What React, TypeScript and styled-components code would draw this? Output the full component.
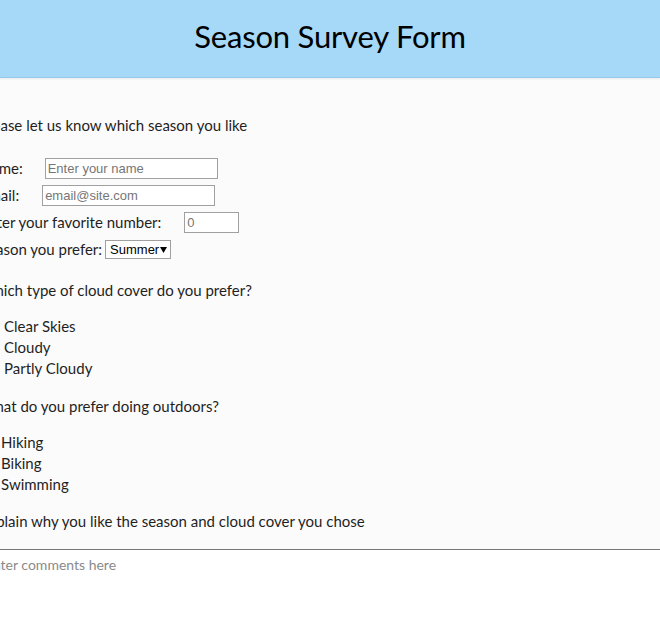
import styled, { createGlobalStyle } from 'styled-components'

const GlobalStyle = createGlobalStyle`
  html, body {
    margin: 0;
    padding: 0;
    background-color: #fbfbfb;
    overflow: hidden;
  }
  body {
    font-family: Lato, 'Noto Sans', sans-serif;
    color: #1f1f1f;
  }
`

const Header = styled.header`
  box-sizing: border-box;
  height: 78px;
  padding-bottom: 5px;
  background-color: #a6d8f7;
  border-bottom: 1px solid #96c9ea;
  box-shadow: 0 1px 2px rgba(0, 0, 0, 0.08);
  display: flex;
  align-items: center;
  justify-content: center;
`

const Title = styled.h1`
  margin: 0;
  font-size: 31px;
  font-weight: 400;
  letter-spacing: -0.2px;
  color: #000;
`

const Form = styled.form`
  margin-left: -20px;
  width: calc(100% + 20px);
  font-size: 15px;
  line-height: 21px;
`

const Intro = styled.p`
  margin: 37px 0 22px;
`

const Field = styled.div`
  display: flex;
  align-items: center;
  height: 21px;
  margin-bottom: 6px;
`

const Label = styled.label<{ $gap?: number }>`
  margin-right: ${(p) => p.$gap ?? 23}px;
`

const TextInput = styled.input<{ $width: number }>`
  box-sizing: border-box;
  width: ${(p) => p.$width}px;
  height: 21px;
  padding: 1px 2px;
  border: 1px solid #a0a0a0;
  border-radius: 0;
  background: #fff;
  font-family: 'Liberation Sans', Arial, sans-serif;
  font-size: 13px;
  color: #222;
  &::placeholder {
    color: #767676;
  }
`

const Select = styled.select`
  box-sizing: border-box;
  height: 19px;
  width: 66px;
  padding: 0 10px 0 4px;
  border: 1px solid #a0a0a0;
  border-radius: 0;
  background-color: #fff;
  font-family: 'Liberation Sans', Arial, sans-serif;
  font-size: 13px;
  color: #000;
  appearance: none;
  background-image: url("data:image/svg+xml;utf8,<svg xmlns='http://www.w3.org/2000/svg' width='8' height='8' viewBox='0 0 8 8'><path d='M0 1h7L3.5 7z' fill='black'/></svg>");
  background-repeat: no-repeat;
  background-position: right 2px center;
`

const Question = styled.p<{ $top: number }>`
  margin: ${(p) => p.$top}px 0 15px;
`

const Options = styled.div`
  display: flex;
  flex-direction: column;
`

const Option = styled.label<{ $shift?: number }>`
  display: flex;
  align-items: center;
  height: 21px;
  input {
    margin: 0 ${(p) => p.$shift ?? 6}px 0 5px;
    width: 13px;
    height: 13px;
  }
`

const Comments = styled.textarea`
  display: block;
  box-sizing: border-box;
  width: 100%;
  height: 90px;
  margin-top: 17px;
  padding: 6px 5px;
  border: none;
  border-top: 1px solid #777;
  background: #fff;
  font-family: Lato, 'Noto Sans', sans-serif;
  font-size: 14px;
  resize: none;
  &::placeholder {
    color: #8a8a8a;
  }
`

export default function App() {
  return (
    <>
      <GlobalStyle />
      <Header>
        <Title>Season Survey Form</Title>
      </Header>
      <Form>
        <Intro>Please let us know which season you like</Intro>
        <Field>
          <Label $gap={22}>Name:</Label>
          <TextInput $width={173} placeholder="Enter your name" />
        </Field>
        <Field>
          <Label>Email:</Label>
          <TextInput $width={173} type="email" placeholder="email@site.com" />
        </Field>
        <Field>
          <Label>Enter your favorite number:</Label>
          <TextInput $width={55} type="number" placeholder="0" />
        </Field>
        <Field>
          <Label $gap={3}>Season you prefer:</Label>
          <Select defaultValue="Summer">
            <option>Spring</option>
            <option>Summer</option>
            <option>Fall</option>
            <option>Winter</option>
          </Select>
        </Field>

        <Question $top={20}>Which type of cloud cover do you prefer?</Question>
        <Options>
          {['Clear Skies', 'Cloudy', 'Partly Cloudy'].map((o) => (
            <Option key={o}>
              <input type="radio" name="cloud" />
              {o}
            </Option>
          ))}
        </Options>

        <Question $top={17}>What do you prefer doing outdoors?</Question>
        <Options>
          {['Hiking', 'Biking', 'Swimming'].map((o) => (
            <Option key={o} $shift={3}>
              <input type="checkbox" />
              {o}
            </Option>
          ))}
        </Options>

        <Question $top={16}>Explain why you like the season and cloud cover you chose</Question>
        <Comments placeholder="Enter comments here" />
      </Form>
    </>
  )
}
